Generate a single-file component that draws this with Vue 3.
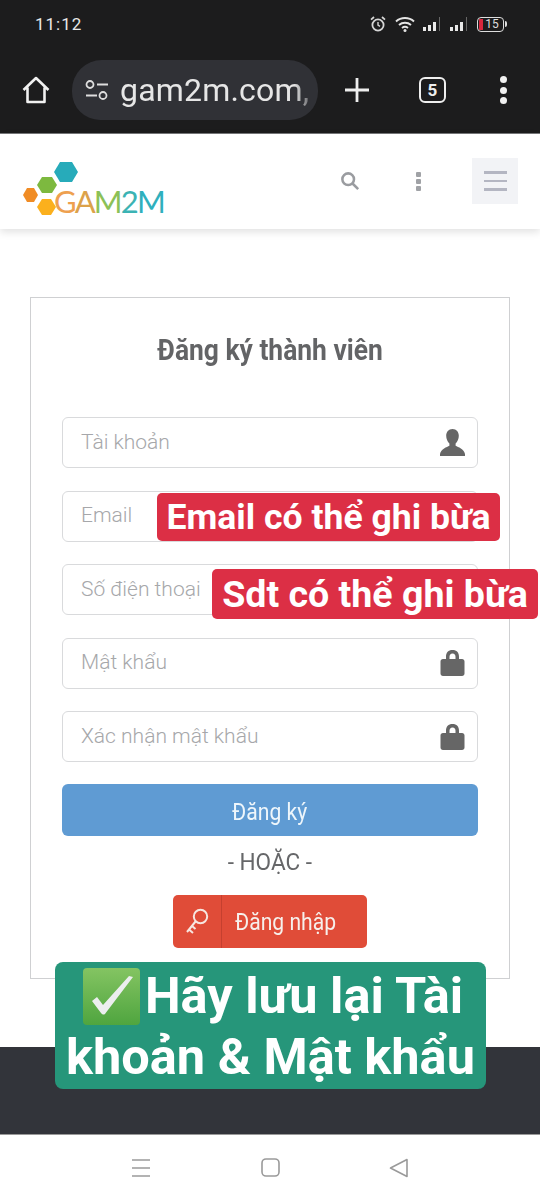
<script setup>
const fields = [
  { label: 'Tài khoản', icon: 'user' },
  { label: 'Email', icon: '' },
  { label: 'Số điện thoại', icon: '' },
  { label: 'Mật khẩu', icon: 'lock' },
  { label: 'Xác nhận mật khẩu', icon: 'lock' }
]
</script>

<template>
  <div class="screen">
    <div class="chrome">
      <div class="status">
        <span class="time">11:12</span>
        <div class="status-icons">
          <svg width="18" height="18" viewBox="0 0 18 18" fill="none" stroke="#d6d6d6" stroke-width="1.8"><circle cx="9" cy="10" r="5.6"/><path d="M9 7v3.2l2 1.2" stroke-width="1.4"/><path d="M2 4.6 5 2M16 4.6 13 2"/></svg>
          <svg class="wifi" width="22" height="18" viewBox="0 0 22 18" fill="none" stroke="#e4e4e4" stroke-width="1.9"><path d="M2 6.5c5-4.6 13-4.6 18 0M5 10c3.400-3 8.600-3 12 0M8 13c1.800-1.400 4.200-1.400 6 0"/><circle cx="11" cy="15.500" r="1.500" fill="#e4e4e4" stroke="none"/></svg>
          <svg class="sig" width="19" height="16" viewBox="0 0 19 16"><path d="M1 11h3v4H1zM6 9h3v6H6zM11 6h3v9h-3z" fill="#e8e8e8"/><path d="M17 1h1v14h-1z" fill="#666"/></svg>
          <svg class="sig two" width="19" height="16" viewBox="0 0 19 16"><path d="M1 11h3v4H1zM6 9h3v6H6zM11 6h3v9h-3z" fill="#e8e8e8"/><path d="M17 1h1v14h-1z" fill="#666"/></svg>
          <div class="battery"><i></i><span>15</span></div>
        </div>
      </div>
      <div class="toolbar">
        <svg class="home" width="28" height="28" viewBox="0 0 28 28" fill="none" stroke="#f1f1f1" stroke-width="2.600" stroke-linejoin="round"><path d="M1.500 14 14 2l12.500 12M5.500 11.500V26h17V11.500"/></svg>
        <div class="pill">
          <svg width="24" height="20" viewBox="0 0 24 20" fill="none" stroke="#dedede" stroke-width="1.800"><circle cx="5" cy="4.500" r="3.500"/><path d="M12 4.500h11M1 15.500h11"/><circle cx="18" cy="15.500" r="3.500"/></svg>
          <span class="url">gam2m.com,</span>
        </div>
        <svg class="plus" width="26" height="26" viewBox="0 0 26 26" stroke="#eee" stroke-width="2.800"><path d="M13 1v24M1 13h24"/></svg>
        <div class="tabs">5</div>
        <div class="kebab"><i></i><i></i><i></i></div>
      </div>
    </div>

    <header class="site-head">
      <div class="logo">
        <svg class="hexes" width="60" height="56" viewBox="0 0 60 56">
          <polygon points="36,10 42,0 54,0 60,10 54,20 42,20" fill="#27abba"/>
          <polygon points="19,23 24,15 34,15 39,23 34,31 24,31" fill="#7db93f"/>
          <polygon points="5,33 9,26 16,26 20,33 16,40 9,40" fill="#f08c25"/>
          <polygon points="19,45 24,37 33,37 38,45 33,53 24,53" fill="#fbb01d"/>
        </svg>
        <span class="brand"><b class="c1">G</b><b class="c2">A</b><b class="c3">M</b><b class="c4">2</b><b class="c5">M</b></span>
      </div>
      <div class="head-icons">
        <svg width="20" height="20" viewBox="0 0 22 22" fill="none" stroke="#9a9ca0" stroke-width="2.800"><circle cx="9" cy="9" r="6.400"/><path d="m13.500 13.500 6.500 6.500"/></svg>
        <div class="head-dots"><i></i><i></i><i></i></div>
        <div class="burger"><i></i><i></i><i></i></div>
      </div>
    </header>

    <main class="content">
      <section class="card">
        <h1 class="title"><span>Đăng ký thành viên</span></h1>
        <div class="fields">
          <div v-for="f in fields" :key="f.label" class="field">
            <span class="ph">{{ f.label }}</span>
            <svg v-if="f.icon === 'user'" width="27" height="27" viewBox="0 0 27 27" fill="#666"><path d="M13.500 0c4 0 6.300 3 6.300 6.800 0 3-1.300 6-3.200 7.600v2.300c2.500 1.400 8.400 3 9.400 8.300v2H1v-2c1-5.300 6.900-6.900 9.400-8.300v-2.300c-1.900-1.600-3.200-4.600-3.200-7.600C7.200 3 9.500 0 13.500 0z"/></svg>
            <svg v-if="f.icon === 'lock'" class="lock" width="25" height="26" viewBox="0 0 25 26"><path fill="#666" fill-rule="evenodd" d="M12.500 0c4.200 0 6.500 2.700 6.500 6.800V9h3c1.500 0 2.500 1 2.500 2.500v12c0 1.500-1 2.500-2.500 2.500H3c-1.500 0-2.500-1-2.500-2.500v-12C.5 10 1.500 9 3 9h3V6.800C6 2.700 8.300 0 12.500 0zm-3 9h6V6.800c0-2-1-3.300-3-3.300s-3 1.300-3 3.300z"/></svg>
          </div>
        </div>
        <button class="submit" type="button"><span>Đăng ký</span></button>
        <p class="or"><span>- HOẶC -</span></p>
        <button class="login" type="button">
          <span class="key">
            <svg width="24" height="28" viewBox="0 0 24 28" fill="none" stroke="#f6e6e0" stroke-width="2"><circle cx="15.500" cy="8.500" r="6.700"/><path d="M10.500 13.500 2 24M4 21.500l4 3.500M7 18l3.500 3"/></svg>
          </span>
          <span class="login-text"><span>Đăng nhập</span></span>
        </button>
      </section>
    </main>

    <footer class="site-foot"></footer>

    <nav class="navbar">
      <svg width="20" height="20" viewBox="0 0 20 20" stroke="#9a9a9a" stroke-width="1.600"><path d="M1 2h18M1 10h18M1 18h18"/></svg>
      <svg width="19" height="19" viewBox="0 0 19 19" fill="none" stroke="#9a9a9a" stroke-width="1.600"><rect x="1" y="1" width="17" height="17" rx="4"/></svg>
      <svg width="20" height="20" viewBox="0 0 20 20" fill="none" stroke="#9a9a9a" stroke-width="1.600" stroke-linejoin="round"><path d="M18 1.500v17L1.500 10z"/></svg>
    </nav>

    <div class="tag tag-email">Email có thể ghi bừa</div>
    <div class="tag tag-sdt">Sdt có thể ghi bừa</div>
    <div class="banner">
      <div class="line first">
        <svg class="check" width="57" height="57" viewBox="0 0 57 57">
          <defs><linearGradient id="g" x1="0" y1="0" x2="0" y2="1"><stop offset="0" stop-color="#84c462"/><stop offset="1" stop-color="#4fa53f"/></linearGradient></defs>
          <rect width="57" height="57" rx="4" fill="url(#g)"/>
          <path d="M9 33l9 12c1.500 2 3.500 2 4.700 0L50 9l-4-1-26 29-6-8z" fill="#eceeee"/>
        </svg>
        <span>Hãy lưu lại Tài</span>
      </div>
      <div class="line">khoản &amp; Mật khẩu</div>
    </div>
  </div>
</template>

<style>
html, body { margin: 0; background: #fff; }
</style>

<style scoped>
.screen {
  position: relative;
  width: 540px;
  height: 1200px;
  overflow: hidden;
  display: flex;
  flex-direction: column;
  font-family: Roboto, "Noto Sans", sans-serif;
  background: #fff;
}
.chrome { height: 133px; background: #1c1c1d; border-bottom: 1px solid #77787a; flex: none; box-sizing: content-box; }
.status { height: 48px; display: flex; align-items: center; justify-content: space-between; padding: 0 36px 0 35px; }
.time { color: #e8e8e8; font-size: 17px; letter-spacing: 1px; }
.status-icons { display: flex; align-items: center; gap: 6px; }
.wifi { margin-left: 1px; }
.sig { margin-left: 0; }
.sig.two { margin-left: 2px; }
.battery { position: relative; width: 25px; height: 13px; margin-left: 3px; border: 1.500px solid #ddd; border-radius: 4px; display: flex; align-items: center; justify-content: center; }
.battery::after { content: ""; position: absolute; right: -4px; top: 3px; width: 2px; height: 6px; background: #ddd; border-radius: 0 2px 2px 0; }
.battery i { position: absolute; left: 1px; top: 1px; bottom: 1px; width: 4px; background: #d6263c; }
.battery span { color: #ddd; font-size: 12px; line-height: 13px; margin-left: 3px; }
.toolbar { height: 60px; padding: 12px 0 0 22px; display: flex; align-items: center; }
.pill { width: 246px; height: 60px; margin-left: 22px; border-radius: 30px 30px 28px 28px; background: #303136; display: flex; align-items: center; padding-left: 13px; box-sizing: border-box; }
.url { color: #e6e6e6; font-size: 32px; margin-left: 11px; letter-spacing: .2px; white-space: nowrap; line-height: 60px; -webkit-mask-image: linear-gradient(90deg, #000 92%, rgba(0,0,0,.35) 100%); mask-image: linear-gradient(90deg, #000 92%, rgba(0,0,0,.35) 100%); }
.plus { margin-left: 26px; }
.tabs { width: 27px; height: 26px; margin-left: 49px; box-sizing: border-box; border: 2.500px solid #eee; border-radius: 6px; color: #eee; font-size: 17px; font-weight: 700; display: flex; align-items: center; justify-content: center; }
.kebab { margin-left: 54px; display: flex; flex-direction: column; gap: 3.500px; }
.kebab i { width: 7px; height: 7px; border-radius: 50%; background: #f1f1f1; }

.site-head { height: 95px; flex: none; display: flex; justify-content: space-between; padding: 24px 22px 0 23px; box-sizing: border-box; background: #fff; box-shadow: 0 3px 8px rgba(0,0,0,.12); position: relative; }
.logo { position: relative; width: 145px; height: 56px; margin-top: 4px; }
.hexes { position: absolute; left: -5px; top: 0; }
.brand { position: absolute; left: 31px; top: 19px; font-family: Lato, sans-serif; font-size: 31px; line-height: 40px; letter-spacing: -1.800px; white-space: nowrap; }
.brand b { font-weight: 400; }
.c1 { color: #eea04f; }
.c2 { color: #dca24a; }
.c3 { color: #8cc157; }
.c4 { color: #3bb3b4; }
.c5 { color: #2fb0bd; }
.head-icons { display: flex; align-items: flex-start; margin-top: 0; }
.head-icons > svg { margin-top: 13px; }
.head-dots { margin: 14px 0 0 56px; display: flex; flex-direction: column; gap: 2px; }
.head-dots i { width: 5px; height: 5px; background: #a0a2a6; border-radius: 1px; }
.burger { width: 46px; height: 46px; margin-left: 51px; margin-top: 0; background: #f2f3f6; display: flex; flex-direction: column; align-items: center; justify-content: center; gap: 6px; }
.burger i { width: 23px; height: 2.500px; background: #b4b6c2; }

.content { flex: 1; padding: 68px 30px 0; box-sizing: border-box; }
.card { height: 682px; box-sizing: border-box; border: 1px solid #cfd0d2; padding: 0 31px; display: flex; flex-direction: column; align-items: stretch; }
.title { margin: 33px 0 0; height: 38px; text-align: center; font-size: 30px; line-height: 38px; font-weight: 700; color: #636466; }
.title span { display: inline-block; transform: scaleX(.88); white-space: nowrap; }
.fields { margin-top: 48px; display: flex; flex-direction: column; gap: 22.500px; }
.field { height: 51px; box-sizing: border-box; border: 1.500px solid #d9dadc; border-radius: 6px; padding: 0 11px 0 18px; display: flex; align-items: center; justify-content: space-between; }
.ph { color: #a6a7aa; font-size: 21px; font-weight: 300; position: relative; top: -1px; }
.lock { margin-right: 1px; }
.submit { margin-top: 22px; height: 52px; border: 0; border-radius: 6px; background: #5f9bd3; color: #eef6fb; font-family: inherit; font-size: 24px; padding: 4px 0 0; }
.submit span, .login-text span { display: inline-block; transform: scaleX(.88); }
.or span { display: inline-block; transform: scaleX(.94); }
.or { margin: 13px 0 0; height: 26px; text-align: center; font-size: 24px; line-height: 26px; color: #666769; }
.login { align-self: center; width: 194px; height: 53px; margin-top: 20px; border: 0; border-radius: 5px; padding: 0; background: #e04c38; color: #f6f0ec; font-family: inherit; display: flex; align-items: stretch; }
.key { width: 49px; box-sizing: border-box; border-right: 1px solid #c5402f; display: flex; align-items: center; justify-content: center; }
.login-text { font-size: 24px; line-height: 55px; margin-left: 13px; white-space: nowrap; }
.login-text span { transform-origin: left center; }

.site-foot { height: 87px; flex: none; background: #32343a; }
.navbar { height: 66px; flex: none; border-top: 1px solid #999; box-sizing: border-box; background: #fff; display: flex; align-items: center; padding: 0 131px 0 131px; justify-content: space-between; }

.tag { position: absolute; color: #fff; background: #dc2f45; border-radius: 5px; font-weight: 700; white-space: nowrap; box-sizing: border-box; display: flex; align-items: center; justify-content: center; }
.tag-email { left: 157px; top: 493px; width: 343px; height: 48px; font-size: 35.6px; }
.tag-sdt { left: 212px; top: 569px; width: 326px; height: 50px; font-size: 37.6px; }
.banner { position: absolute; left: 55px; top: 962px; width: 431px; height: 127px; border-radius: 8px; background: #26967a; color: #fff; font-size: 50.500px; font-weight: 700; display: flex; flex-direction: column; align-items: center; justify-content: center; white-space: nowrap; }
.line { height: 62px; line-height: 62px; display: flex; align-items: center; gap: 5px; }
.first { padding: 3px 0 0 5px; box-sizing: border-box; }
</style>
